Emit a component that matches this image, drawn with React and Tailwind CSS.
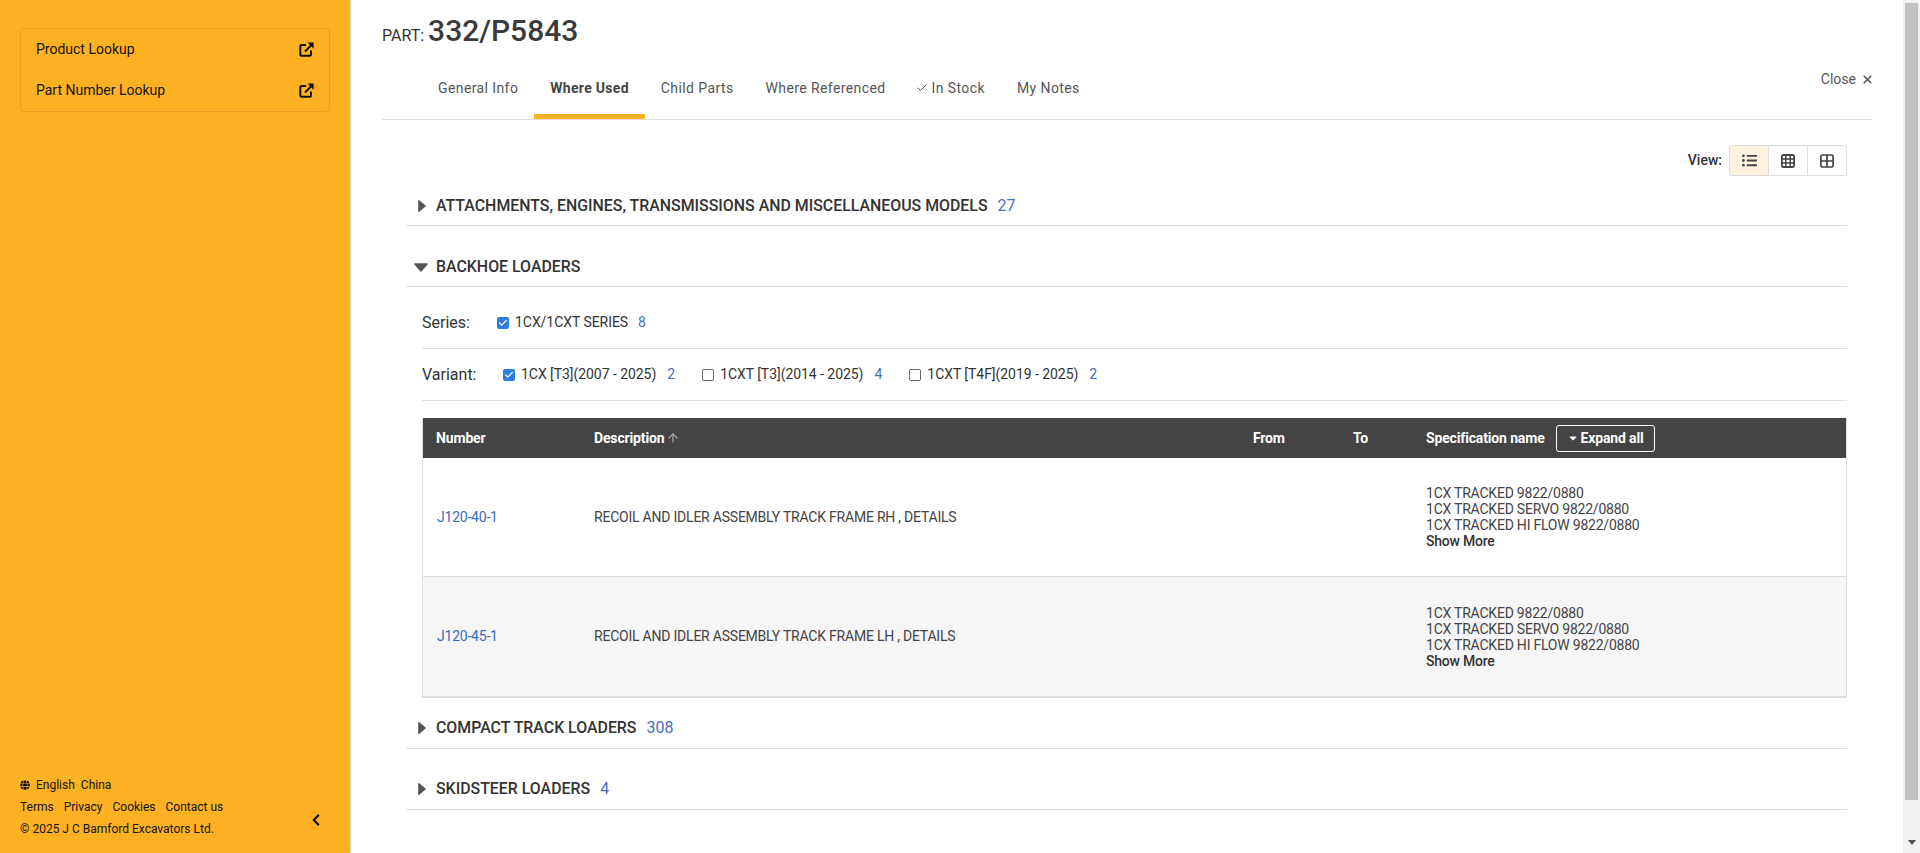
import React from "react";
import { Check, X, ArrowUp, ChevronLeft } from "lucide-react";
import { FaGlobe, FaCaretDown, FaListUl } from "react-icons/fa";

const TABS = ["General Info", "Where Used", "Child Parts", "Where Referenced", "In Stock", "My Notes"];

const SPECS = ["1CX TRACKED 9822/0880", "1CX TRACKED SERVO 9822/0880", "1CX TRACKED HI FLOW 9822/0880"];

const ROWS = [
  { number: "J120-40-1", desc: "RECOIL AND IDLER ASSEMBLY TRACK FRAME RH , DETAILS", bg: "bg-white" },
  { number: "J120-45-1", desc: "RECOIL AND IDLER ASSEMBLY TRACK FRAME LH , DETAILS", bg: "bg-[#f6f6f6]" },
];

const VARIANTS = [
  { label: "1CX [T3](2007 - 2025)", count: 2, checked: true },
  { label: "1CXT [T3](2014 - 2025)", count: 4 },
  { label: "1CXT [T4F](2019 - 2025)", count: 2 },
];

function Box({ checked }) {
  return checked ? (
    <span className="flex h-3 w-3 items-center justify-center rounded-[2px] bg-[#2f7de1]">
      <Check className="h-[10px] w-[10px] text-white" strokeWidth={3} />
    </span>
  ) : (
    <span className="h-3 w-3 rounded-[2px] border border-[#666] bg-white" />
  );
}

function ExternalIcon() {
  return (
    <svg viewBox="0 0 15 15" className="h-[15px] w-[15px]" fill="none" stroke="currentColor" strokeWidth="2">
      <path d="M7 3H2.5A1.2 1.2 0 0 0 1.3 4.2v8.3a1.2 1.2 0 0 0 1.2 1.2h8.3a1.2 1.2 0 0 0 1.2-1.2V8.5" />
      <path d="M6 9.5L12 3.5" />
      <path d="M8.5 0.6H14.6V6.7Z" fill="currentColor" stroke="none" />
    </svg>
  );
}

function GridIcon() {
  return (
    <svg viewBox="0 0 14 14" className="h-[14px] w-[14px] text-[#444]" fill="none" stroke="currentColor">
      <rect x="0.9" y="1" width="12.2" height="12" rx="1.5" strokeWidth="1.8" />
      <path d="M4.8 1V13M9.2 1V13M1 5H13M1 9H13" strokeWidth="1.5" />
    </svg>
  );
}

function PanelsIcon() {
  return (
    <svg viewBox="0 0 14 14" className="h-[14px] w-[14px] text-[#444]" fill="none" stroke="currentColor" strokeWidth="1.7">
      <rect x="0.9" y="1" width="12.2" height="12" rx="1.5" />
      <path d="M7 1V13M1 7H13" />
    </svg>
  );
}

function Caret({ open }) {
  return open ? (
    <svg viewBox="0 0 14 9" className="ml-2 h-[9px] w-[14px] text-[#555]" fill="currentColor" stroke="currentColor" strokeWidth="1.5" strokeLinejoin="round">
      <path d="M1 1H13L7 8Z" />
    </svg>
  ) : (
    <svg viewBox="0 0 9 14" className="ml-3 h-[14px] w-2 text-[#555]" fill="currentColor" stroke="currentColor" strokeWidth="1.5" strokeLinejoin="round">
      <path d="M1 1L8 7L1 13Z" />
    </svg>
  );
}

function Section({ title, count, open, h, pb = "pb-2" }) {
  return (
    <div className={`flex ${h} items-end border-b border-[#e0e0e0] ${pb}`}>
      <span className="flex h-6 w-[30px] items-center">
        <Caret open={open} />
      </span>
      <span className="text-[15.9px] font-medium leading-[24px] text-[#333]">{title}</span>
      {count != null && <span className="ml-[10px] text-[16px] leading-[24px] text-[#4a6dbd]">{count}</span>}
    </div>
  );
}

export default function App() {
  return (
    <div className="flex h-[853px] overflow-hidden bg-white font-['Roboto',sans-serif] text-[#333]">
      <aside className="flex w-[350px] shrink-0 flex-col justify-between bg-[#ffb124] px-5 pt-7 pb-[13px] text-[#111] shadow-[1px_0_2px_rgba(0,0,0,0.2)]">
        <div className="flex h-[84px] flex-col justify-center rounded-[3px] border border-[#e8a222] text-[14px]">
          {["Product Lookup", "Part Number Lookup"].map((t) => (
            <div key={t} className="flex h-[41px] items-center justify-between px-[15px]">
              <span>{t}</span>
              <ExternalIcon />
            </div>
          ))}
        </div>
        <div className="relative text-[12px] leading-[22px]">
          <div className="flex items-center">
            <FaGlobe className="mr-[6px] h-[10px] w-[10px]" />
            <span className="mr-[6px]">English</span>
            <span>China</span>
          </div>
          <div className="flex gap-[10px]">
            <span>Terms</span>
            <span>Privacy</span>
            <span>Cookies</span>
            <span>Contact us</span>
          </div>
          <div>© 2025 J C Bamford Excavators Ltd.</div>
          <ChevronLeft className="absolute right-[5px] bottom-[11px] h-[18px] w-[18px]" strokeWidth={3} />
        </div>
      </aside>

      <main className="min-w-0 flex-1 pr-[31px] pl-8">
        <div className="flex h-[62px] items-baseline pt-[11px]">
          <span className="mr-1 text-[16px] text-[#333]">PART:</span>
          <span className="text-[30px] font-medium leading-[40px] text-[#3a3a3a]">332/P5843</span>
        </div>
        <div className="relative flex h-[58px] border-b border-[#e0e0e0] pl-10">
          {TABS.map((t) => (
            <div
              key={t}
              className={`flex h-[57px] items-center border-b-[5px] px-4 text-[14px] ${
                t === "Where Used" ? "border-[#ffb124] font-bold tracking-[0.3px] text-[#444]" : "border-transparent tracking-[0.4px] text-[#555]"
              }`}
            >
              {t === "In Stock" && <Check className="mr-1 ml-[-2px] h-3 w-3" />}
              {t}
            </div>
          ))}
          <div className="absolute top-[7px] right-[-2px] flex items-center gap-[5px] text-[14px] text-[#555]">
            Close <X className="h-[13px] w-[13px]" strokeWidth={3} />
          </div>
        </div>

        <div className="pr-[25px] pl-[24px]">
          <div className="flex h-[56px] items-center justify-end pt-[25px] text-[14px] font-medium">
            <span className="mr-[7px]">View:</span>
            <div className="flex h-[31px] overflow-hidden rounded-[3px] border border-[#ddd]">
              <span className="flex w-[39px] items-center justify-center border-r border-[#ddd] bg-[#fff3df]">
                <FaListUl className="h-[15px] w-[15px] text-[#444]" />
              </span>
              <span className="flex w-[39px] items-center justify-center border-r border-[#ddd]">
                <GridIcon />
              </span>
              <span className="flex w-[38px] items-center justify-center">
                <PanelsIcon />
              </span>
            </div>
          </div>

          <Section title="ATTACHMENTS, ENGINES, TRANSMISSIONS AND MISCELLANEOUS MODELS" count={27} h="h-[50px]" pb="pb-[7px]" />
          <Section title="BACKHOE LOADERS" open h="h-[61px]" pb="pb-[7px]" />

          <div className="ml-4">
            <div className="flex h-[62px] items-center border-b border-[#e0e0e0] pt-[10px]">
              <span className="w-[75px] text-[16px]">Series:</span>
              <Box checked />
              <span className="ml-[6px] text-[14px] tracking-[-0.05px]">1CX/1CXT SERIES</span>
              <span className="ml-[10px] text-[14px] text-[#4a6dbd]">8</span>
            </div>
            <div className="flex h-[52px] items-center border-b border-[#e0e0e0]">
              <span className="w-[81px] text-[16px]">Variant:</span>
              {VARIANTS.map((v) => (
                <span key={v.label} className="mr-[27px] flex items-center">
                  <Box checked={v.checked} />
                  <span className="ml-[6px] text-[14px] tracking-[-0.05px]">{v.label}</span>
                  <span className="ml-[11px] text-[14px] text-[#4a6dbd]">{v.count}</span>
                </span>
              ))}
            </div>

            <div className="mt-[17px] border-x border-b-2 border-[#ddd]">
              <div className="flex h-[40px] items-center bg-[#444] text-[14px] font-bold tracking-[-0.15px] text-white">
                <span className="w-[171px] pl-[13px]">Number</span>
                <span className="flex w-[659px] items-center">
                  Description <ArrowUp className="ml-[2px] h-[14px] w-[14px] text-[#aaa]" />
                </span>
                <span className="w-[100px]">From</span>
                <span className="w-[73px]">To</span>
                <span>Specification name</span>
                <span className="ml-[11px] flex h-[27px] w-[99px] items-center justify-center rounded-[3px] border border-white">
                  <FaCaretDown className="mr-[2px] h-3 w-3" /> Expand all
                </span>
              </div>
              {ROWS.map((r) => (
                <div key={r.number} className={`flex h-[119px] items-center border-b border-[#ddd] last:border-b-0 ${r.bg} text-[14px] tracking-[-0.22px] text-[#444]`}>
                  <span className="w-[171px] pl-[14px] text-[#3b6cb7]">{r.number}</span>
                  <span className="w-[832px]">{r.desc}</span>
                  <div className="leading-[16px]">
                    {SPECS.map((s) => (
                      <div key={s}>{s}</div>
                    ))}
                    <div className="font-medium text-[#333]">Show More</div>
                  </div>
                </div>
              ))}
            </div>
          </div>

          <Section title="COMPACT TRACK LOADERS" count={308} h="h-[51px]" />
          <Section title="SKIDSTEER LOADERS" count={4} h="h-[61px]" />
        </div>
      </main>

      <div className="flex w-[17px] shrink-0 flex-col items-center bg-[#f1f1f1]">
        <div className="mt-[3px] h-[797px] w-[13px] bg-[#c1c1c1]" />
        <svg viewBox="0 0 8 5" className="mt-[40px] h-[5px] w-2 text-[#505050]" fill="currentColor">
          <path d="M0 0H8L4 5Z" />
        </svg>
      </div>
    </div>
  );
}
